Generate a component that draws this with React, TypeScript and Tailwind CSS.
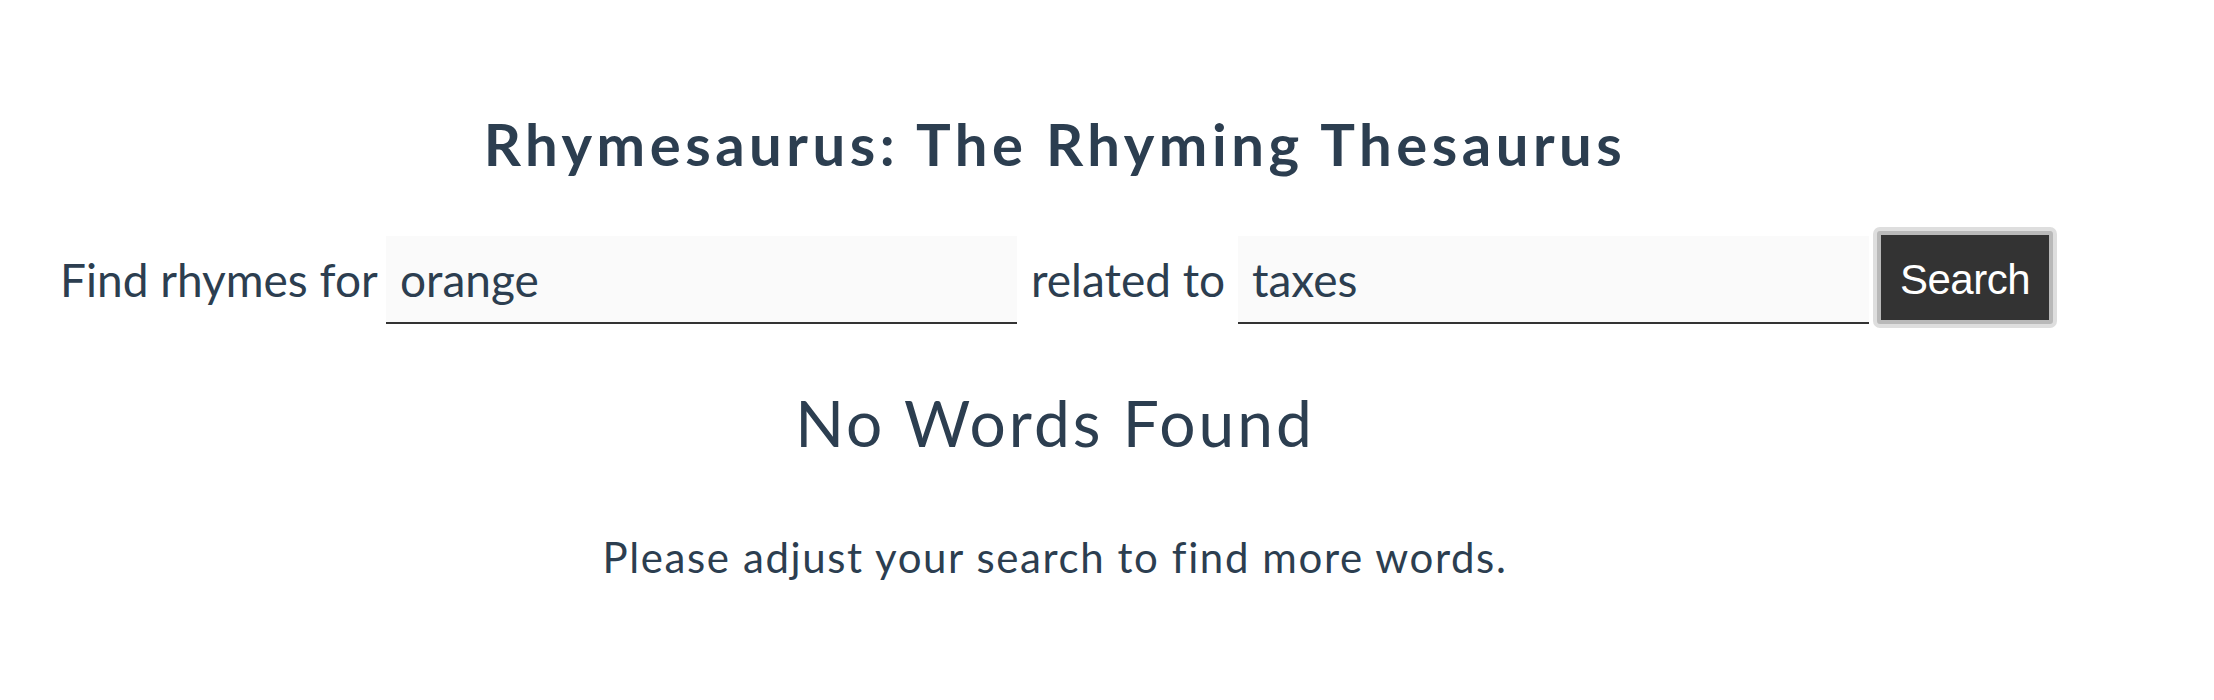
import React from "react";

const App = () => {
  return (
    <div className="w-[2110px] bg-white pb-[100px] font-[Lato,sans-serif] text-[#2c3e50]">
      {/* === Title === */}
      <h1 className="pt-[115px] text-center text-[58px] font-bold leading-none tracking-[4.5px]">
        Rhymesaurus: The Rhyming Thesaurus
      </h1>

      {/* === Search form === */}
      <form
        className="mt-[58px] flex items-start pl-[60px]"
        onSubmit={(e) => e.preventDefault()}
      >
        <label className="mt-[26px] w-[326px] whitespace-nowrap text-[46px] leading-none">
          Find rhymes for
        </label>
        <input
          className="mt-[5px] h-[88px] w-[631px] border-b-2 border-[#333] bg-[#fafafa] pl-[14px] text-[46px] leading-none text-[#2c3e50] outline-none"
          defaultValue="orange"
        />
        <label className="mt-[26px] w-[221px] whitespace-nowrap pl-[14px] text-[46px] leading-none">
          related to
        </label>
        <input
          className="mt-[5px] h-[88px] w-[631px] border-b-2 border-[#333] bg-[#fafafa] pl-[14px] text-[46px] leading-none text-[#2c3e50] outline-none"
          defaultValue="taxes"
        />
        <button
          type="submit"
          className="ml-[8px] flex h-[93px] w-[176px] items-center justify-center rounded-[3px] border-4 border-[#b9b9b9] bg-[#333] pt-[5px] font-['Liberation_Sans',Arial,sans-serif] text-[42px] leading-none tracking-[-0.5px] text-white shadow-[0_0_0_4px_#dedede]"
        >
          Search
        </button>
      </form>

      {/* === Empty result === */}
      <h2 className="mt-[67px] text-center text-[64px] font-normal leading-none tracking-[3px]">
        No Words Found
      </h2>
      <p className="mt-[81px] text-center text-[42px] leading-none tracking-[1.6px]">
        Please adjust your search to find more words.
      </p>
    </div>
  );
};

export default App;
